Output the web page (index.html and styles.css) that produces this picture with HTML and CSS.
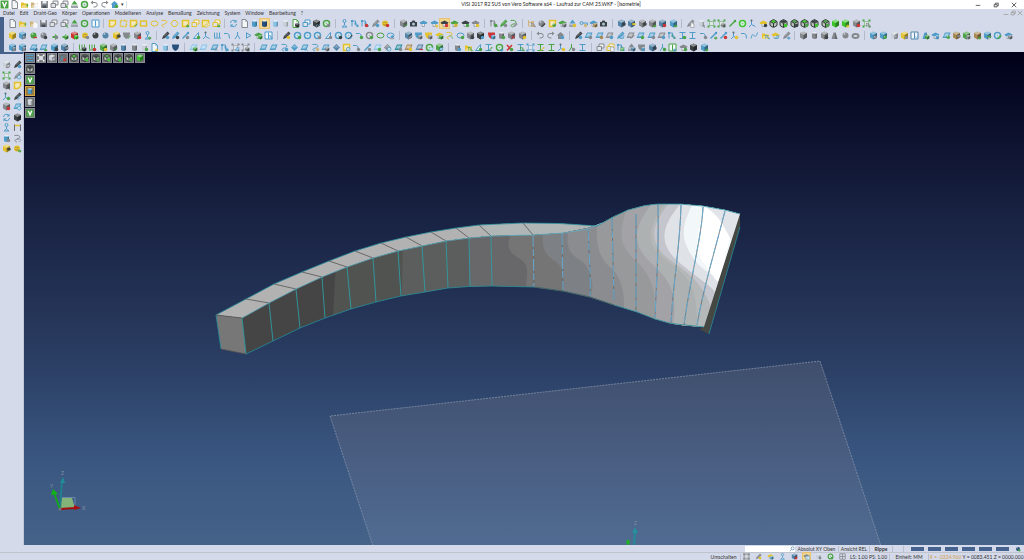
FILE: index.html
```html
<!DOCTYPE html>
<html lang="de">
<head>
    <meta charset="utf-8">
    <title>VISI 2017 R2</title>
    <link rel="stylesheet" href="styles.css">
</head>
<body>
    <header>
        <div class="titlebar">
            <div class="quick" data-icons="v-green doc-grey folder-yellow/up-green folder-tan/doc-white disk-grey copy-grey copy-grey/pointer-green eject-green ring-green undo-grey redo-grey house-blue/dot-green"></div>
            <span class="caret">▾</span>
            <h1>VISI 2017 R2 SU5 von Vero Software x64 - Laufrad zur CAM 25.WKF - [Isometrie]</h1>
            <div class="winctl">
                <button aria-label="Minimieren"><svg viewBox="0 0 8 8"><path d="M1 4.500h6"/></svg></button>
                <button aria-label="Wiederherstellen"><svg viewBox="0 0 8 8"><path d="M1.500 3.500h4v3h-4zM3 3V1.500h4v3.500h-1"/></svg></button>
                <button aria-label="Schließen"><svg viewBox="0 0 8 8"><path d="M1 1l6 6M7 1l-6 6"/></svg></button>
            </div>
        </div>
        <nav class="menu">
            <a href="#">Datei</a><a href="#">Edit</a><a href="#">Draht-Geo</a><a href="#">Körper</a><a href="#">Operationen</a><a href="#">Modellieren</a><a href="#">Analyse</a><a href="#">Bemaßung</a><a href="#">Zeichnung</a><a href="#">System</a><a href="#">Window</a><a href="#">Bearbeitung</a><a href="#">?</a>
            <div class="winctl inner">
                <button aria-label="Fenster minimieren"><svg viewBox="0 0 8 8"><path d="M1 6h6"/></svg></button>
                <button aria-label="Fenster wiederherstellen"><svg viewBox="0 0 8 8"><path d="M1.500 3.500h4v3h-4zM3 3V1.500h4v3.500h-1"/></svg></button>
                <button aria-label="Fenster schließen"><svg viewBox="0 0 8 8"><path d="M1 1l6 6M7 1l-6 6"/></svg></button>
            </div>
        </nav>
        <div class="toolbars">
            <div class="bar bar-1" data-icons="doc-grey folder-yellow/up-green folder-tan/doc-white disk-grey copy-grey copy-grey/pointer-green eject-green ring-green window-blue |
                note-yellow dash-yellow note-yellow/check-green rect-yellow oval-yellow curve-yellow hex-yellow note-yellow/arrow-green copy-yellow note-yellow/copy-yellow copy-yellow/arrow-green |
                refresh-blue doc-grey cyl-blue hi:cyl-navy cyl-sky cyl-light doc-green/cube-dark copy-blue cube-dark/wave-sky ring-green/dot-grey |
                person-blue nodes-blue nodes-blue/dot-red pencil-grey/dot-blue face-yellow/dot-red |
                cube-grey/check-green camera-dark hat-blue hat-blue/arrow-yellow hi:hat-dark/dot-red hat-green/face-yellow hat-dark/dot-green hat-grey/dot-yellow |
                nodes-grey/dot-green pencil-green/dot-grey curve-green/pencil-grey |
                tree-tan/nodes-grey sphere-grey/pencil-dark note-yellow/sphere-green hat-green/cube-grey eject-blue/dot-yellow key-blue/dot-tan hat-blue/cube-brown camera-dark |
                cube-steel/flag-dark cube-steel/flag-yellow cube-grey/flag-dark cube-grey/arrow-green cube-steel/dot-red cube-blue/arrow-green |
                pencil-grey/doc-grey cyl-light/pointer-grey fit-green fit-green/cube-grey line-green ring-lime axis-blue hat-yellow/dot-dark wire-lime wire-dark/dot-lime wire-green/dot-dark wire-lime/dot-green wire-dark/dot-lime wire-green/dot-green cube-lime cube-lime/arrow-yellow cube-grey/dot-red fit-green/nodes-grey"></div>
            <div class="bar bar-2" data-icons="cube-yellow cube-blue/sphere-grey sphere-green/band-red sphere-grey/dot-dark arrow-green/dot-grey arrow-green/cube-green cube-red/cube-lime face-yellow/dot-grey sphere-dark sphere-steel cube-yellow/flag-dark shield-grey/check-green cube-grey/dot-red person-blue/arrow-green |
                pencil-dark/dot-blue pencil-blue/dot-dark line-blue/dot-grey tri-blue/dot-green axis-blue comb-blue corner-blue fork-blue play-blue hat-green/cube-green window-blue/nodes-blue |
                pencil-dark/dot-yellow ring-blue/dot-green ring-blue ring-blue/dot-grey tri-blue/dot-grey ring-blue/dot-dark ring-blue/line-dark corner-blue/dot-green ring-grey/dot-green oval-green oval-blue/eject-blue |
                cube-steel/pencil-grey shield-blue/cube-grey shield-yellow/cube-grey hat-yellow/cube-green curve-yellow/corner-green oval-blue/dot-green cube-grey/dot-dark cube-dark/dot-blue shield-red/cube-blue cyl-grey/dot-green cube-grey/cross-red cube-grey/dot-yellow |
                undo-grey redo-grey house-grey/dot-blue |
                pencil-dark/dot-blue plane-blue/dot-grey plane-blue/dot-brown plane-grey/dot-blue pencil-blue/plane-blue plane-grey/line-grey plane-blue/dot-green plane-blue/dot-grey plane-grey/dot-blue nodes-blue/corner-green beam-blue/dot-green beam-blue corner-blue/dot-grey line-blue/arrow-green line-blue/dot-red axis-blue/dot-yellow corner-blue wave-blue folder-yellow/nodes-blue hat-yellow/plane-blue pencil-grey/arrow-blue |
                cube-grey cyl-grey cube-grey/dot-dark cone-grey sphere-grey torus-grey |
                cube-blue/sphere-grey cube-blue/sphere-green cube-light/sphere-grey cube-yellow/dot-grey window-steel/wave-blue cone-blue/cube-green hat-blue/cyl-blue plane-blue/sphere-green cube-brown/flag-grey cube-green/cube-grey cube-brown/arrow-green cube-blue/hat-green ring-blue/pencil-green hat-blue/cube-grey"></div>
            <div class="bar bar-3" data-icons="cube-blue/cyl-grey cube-blue/cyl-grey plane-blue/cube-blue plane-blue/arrow-green cube-blue/dot-dark cube-steel/flag-grey |
                comb-green/cube-dark comb-green/dot-red cube-green/dot-yellow cube-grey/check-green cyl-steel cyl-grey cyl-light/dot-green doc-blue/arrow-yellow cyl-sky shield-navy |
                plane-sky/cube-green plane-sky plane-blue/fork-grey nodes-blue/arrow-blue fit-grey/plane-blue fit-grey/cube-grey |
                plane-blue plane-blue curve-blue/dot-blue diamond-blue plane-blue/fork-blue curve-blue/dot-tan plane-blue/cube-grey diamond-steel note-yellow/ring-blue corner-blue/dot-grey line-blue/dot-grey plane-sky/dot-green diamond-grey/ring-blue plane-teal/dot-grey plane-brown/dot-yellow plane-steel/band-red ring-green/plane-sky cube-green/plane-blue |
                cyl-grey/dot-blue folder-yellow/nodes-green tri-blue/dot-green beam-blue/line-green ring-green/arrow-blue cross-red/dot-green beam-blue/nodes-green fit-blue beam-green/line-yellow beam-green axis-blue/dot-yellow fork-green/dot-grey beam-blue |
                copy-grey copy-yellow/doc-grey nodes-blue/plane-green eject-grey/cube-steel shield-grey/cyl-blue cube-steel/flag-dark fork-blue/dot-green window-green/arrow-blue hat-grey/dot-green cube-dark cube-blue/arrow-green"></div>
        </div>
    </header>

    <main>
        <aside class="side">
            <div class="palette" data-icons="cube-light/plane-grey pencil-dark/dot-blue fit-green pencil-grey/ring-blue cube-grey/pointer-dark note-yellow axis-blue/dot-green pencil-dark/curve-blue cube-grey/dot-red plane-blue/ring-blue refresh-blue cube-dark person-blue bridge-yellow cyl-blue/dot-grey curve-grey/undo-grey cube-yellow/flag-dark face-yellow/arrow-green"></div>
        </aside>
        <section class="view">
            <svg class="scene" viewBox="24 52 1000 493" preserveAspectRatio="xMidYMid slice">
                <defs>
                    <linearGradient id="plane" x1="0" y1="0" x2="0" y2="1">
                        <stop offset="0" stop-color="#3f4e6c"/>
                        <stop offset=".5" stop-color="#495d81"/>
                        <stop offset="1" stop-color="#506b92"/>
                    </linearGradient>
                    <clipPath id="body">
                        <path d="M242 318 269 303 296 289 322 277 347 267 373 258 398 251 422 246 446 241 469 238 491 236 533 235 563 233 588 228 602 223 613 217 628 210 645 205.500 658 204 680 204 703 206 725 210 740 214 704 327 684 325.500 671 323.500 655 319 637 312 614 305 590 297 563 291 534 287 492 286 469 286.500 448 288 425 292 401 296 376 302 351 309 325 318 300 328 273 341 246 354z"/>
                    </clipPath>
                </defs>

                <!-- work plane -->
                <path d="M330 416 820 361 881 546H373z" fill="url(#plane)"/>
                <path d="M373 546 330 416 820 361 881 546" class="plane-edge"/>

                <!-- rib, top face -->
                <path d="M216 315 246 299 274 284 302 272 329 261 355 251 381 243 406 237 431 232 456 228 479 225 523 223 560 223.500 597 226 588 229 563 233 533 235 491 236 469 238 446 241 422 246 398 251 373 258 347 267 322 277 296 289 269 303 242 318z" fill="#b2b2b2"/>
                <path d="M479 225 523 223 560 223.500 597 226 588 229 563 233 533 235 491 236z" fill="#b0b5b5"/>
                <path d="M246 299 269 303M274 284 296 289M302 272 322 277M329 261 347 267M355 251 373 258M381 243 398 251M406 237 422 246M431 232 446 241M456 228 469 238M479 225 491 236M523 223 533 235" class="seam"/>
                <path d="M216 315 242 318 246 354 221 349z" fill="#777"/>

                <!-- shading bands on the long side -->
                <g clip-path="url(#body)">
                    <path d="M240 190h520v170H240z" fill="#454545"/>
                    <path d="M336 260 332 335H770V190H336z" fill="#505350"/>
                    <path d="M403 240 401 335H770V190H403z" fill="#5b5e5c"/>
                    <path d="M469 230 470 335H770V190H469z" fill="#68686a"/>
                    <path d="M512 230C505 248 509 252 520 259S526 275 526 290V335H770V190H512z" fill="#757575"/>
                    <path d="M543 228C541 248 545 255 555 261S563 280 563 295V335H770V190H543z" fill="#7d8185"/>
                    <path d="M570 225C564 247 570 254 580 260S596 285 590 300V335H770V190H570z" fill="#8b8c90"/>
                    <path d="M598 215C594 245 600 259 610 267S625 290 624 310V335H770V190H598z" fill="#98999b"/>
                    <path d="M630 200C617 235 619 245 636 261S658 295 653 322V335H770V190H630z" fill="#a2a2a7"/>
                    <path d="M655 200C634 225 630 243 650 262S678 290 673 328V335H770V190H655z" fill="#adb1b1"/>
                    <path d="M668 200C644 230 645 246 670 263S697 295 697 330V335H770V190H668z" fill="#b5b8b9"/>
                    <path d="M672 200C648 227 648 245 673 262S706 292 712 310V335H770V190H672z" fill="#c5c6cd"/>
                    <path d="M684 200C659 227 658 245 681 264S710 284 718 296H770V190H684z" fill="#dfe3e7"/>
                    <path d="M695 200C679 228 682 240 692 256S712 272 722 284H770V190H695z" fill="#f2f8fa"/>
                    <path d="M705 207C698 230 692 250 705 265S717 290 722 270L730 238 717 215z" fill="#fff"/>
                    <path d="M700 204 742 213 732 242C724 225 718 213 700 204z" fill="#e1e4e8"/>
                </g>
                <path d="M740 214V227L709 334 699 329 704 327z" fill="#454743"/>

                <path d="M242 318 246 354M269 303 273 341M296 289 300 328M322 277 325 318M347 267 351 309M373 258 376 302M398 251 401 296M422 246 425 292M446 241 448 288M469 238 470 286M491 236 492 286" class="rib"/>
                <path d="M533 235 534 287M562 233 563 290M588 229C589 255 591 275 590 297M612 217 614 300M636 214 636 312M658 204C659 250 656 290 655 318M681 205C680 245 673 285 671 323M703 207C702 235 690 280 684 325M725 211C715 250 703 290 697 325" class="rib-dark"/>
                <path d="M533 235 534 287M562 233 563 290M588 229C589 255 591 275 590 297M612 217 614 300M636 214 636 312M658 204C659 250 656 290 655 318M681 205C680 245 673 285 671 323M703 207C702 235 690 280 684 325M725 211C715 250 703 290 697 325" class="rib-blue"/>
                <path d="M221 349 216 315 246 299 274 284 302 272 329 261 355 251 381 243 406 237 431 232 456 228 479 225 523 223 560 223.500 597 226 613 217 628 210 645 205.500 658 204 680 204 703 206 725 210 740 214M246 354 273 341 300 328 325 318 351 309 376 302 401 296 425 292 448 288 469 286.500 492 286 534 287 563 291 590 297 614 305 637 312 655 319 671 323.500 704 327M740 227 709 334" class="outline"/>
                <path d="M242 318 269 303 296 289 322 277 347 267 373 258 398 251 422 246 446 241 469 238 491 236 533 235 563 233 588 229 602 223" class="outline-light"/>
                <path d="M216 315 242 318M221 349 246 354M534 287 563 291 590 297 614 305" class="seam"/>

                <!-- axis symbols -->
                <path d="M62 498h10l3 10H60z" fill="#85b478"/>
                <path d="M62 497.500h13v11" fill="none" stroke="#8ba2c2" stroke-width=".6"/>
                <path d="M60 509 62 481" stroke="#20808c" stroke-width="2"/>
                <path d="M60 483 63 477 65 483z" fill="#238c99"/>
                <path d="M60 509 54 493" stroke="#12a81a" stroke-width="2"/>
                <path d="M51 495 53 489 58 494z" fill="#0fb416"/>
                <path d="M60 509 75 508" stroke="#a01010" stroke-width="2"/>
                <path d="M74 505 81 508 74 510z" fill="#a80f0f"/>
                <circle cx="60" cy="509" r="1.500" fill="#777"/>
                <text x="61" y="475">Z</text><text x="50" y="488">Y</text><text x="82" y="510">X</text>
                <path d="M634 546 635 531" stroke="#238c99" stroke-width="2"/>
                <path d="M632 533 635 527 638 533z" fill="#27909c"/>
                <path d="M626 541 629 539 630 544 627 545z" fill="#1fae26"/>
                <text x="634" y="525">Z</text>
            </svg>
            <div class="view-top" data-icons="lines-blue fit-white cube-light/plane-grey axis-blue/dot-red wire-lime wire-dark/dot-lime wire-dark/dot-green wire-green/dot-lime wire-dark/dot-lime wire-dark/dot-green cube-lime"></div>
            <div class="view-left" data-icons="wire-dark v-green hi:cyl-blue cyl-light v-green"></div>
        </section>
    </main>

    <footer>
        <div class="status">
            <label class="search"><input type="text" aria-label="Suche"><svg viewBox="0 0 8 8"><circle cx="5" cy="3" r="2"/><path d="M3.500 4.500 1 7"/></svg></label>
            <span class="cell c-plane">Absolut XY Oben</span>
            <span class="cell c-view">Ansicht REL</span>
            <span class="cell c-layer">Rippe</span>
            <span class="cell c-gap"></span>
            <div class="swatches"><i></i><i></i><i></i><i></i><i></i><i></i></div>
            <div class="globe" data-icons="sphere-navy/dot-green"></div>
        </div>
        <div class="status">
            <span class="cell c-switch">Umschalten</span>
            <div class="tools" data-icons="on:fit-grey pencil-grey/dot-yellow hat-yellow/cube-blue person-blue cube-steel/dot-red hi:hat-grey/window-blue cyl-light/dot-grey ring-green/dot-green grid-grey"></div>
            <span class="cell c-scale">LS: 1.00 PS: 1.00</span>
            <span class="cell c-unit">Einheit: MM</span>
            <span class="cell c-pos"><b>X = -0324.960</b> Y = 0083.451 Z = 0000.000</span>
        </div>
    </footer>
    <script src="icons.js"></script>
</body>
</html>
```
FILE: styles.css
```css
* {
  box-sizing: border-box;
}

body {
  display: flex;
  flex-direction: column;
  height: 100vh;
  margin: 0;
  overflow: hidden;
  background: #d5daea;
  color: #333;
  font: 5px/7px Lato, "Open Sans", sans-serif;
}

button {
  display: block;
  padding: 0;
  border: 0;
  background: none;
}

svg {
  display: block;
}

/* title and menu */
.titlebar {
  display: flex;
  align-items: center;
  height: 9px;
  background: #fff;
}

.quick {
  display: flex;
  gap: 1px;
}

.caret {
  width: 8px;
  text-align: center;
  border-right: 1px solid #ddd;
}

h1 {
  flex: 1;
  margin: 0;
  color: #222;
  font-size: 5px;
  font-weight: normal;
  text-align: center;
}

.winctl {
  display: flex;
  gap: 12px;
  margin-right: 7px;
}

.winctl svg {
  width: 6px;
  height: 6px;
  fill: none;
  stroke: #333;
}

.winctl.inner {
  gap: 1px;
  margin: 0 1px 0 auto;
}

.winctl.inner svg {
  stroke: #999;
}

.menu {
  display: flex;
  align-items: center;
  gap: 5px;
  height: 8px;
  padding-left: 3px;
}

.menu a {
  color: #333;
  text-decoration: none;
}

.toolbars {
  height: 35px;
  padding-left: 4px;
  border-left: 4px solid #46618c;
}

.bar {
  display: flex;
  justify-content: space-between;
  align-items: center;
  height: 12px;
}

.bar-1 {
  width: 85%;
}

.bar-2 {
  width: 99%;
}

.bar-3 {
  width: 69%;
}

.ico,
.ico svg {
  width: 9px;
  height: 9px;
}

.ico.hi {
  background: #f3d68c;
  outline: 1px solid #e6c474;
}

.sep {
  width: 6px;
  height: 9px;
  background: linear-gradient(#b3b9c8, #b3b9c8) center / 1px 9px no-repeat;
}

/* work area */
main {
  display: flex;
  flex: 1;
  min-height: 0;
}

.side {
  width: 24px;
  padding: 6px 2px;
  border-top: 2px solid #46618c;
  border-right: 1px solid #c2c8d8;
}

.palette {
  display: grid;
  grid-template-columns: 9px 9px;
  column-gap: 2px;
  align-content: space-between;
  height: 93px;
}

.view {
  position: relative;
  flex: 1;
  overflow: hidden;
  background: linear-gradient(#000018, #151d3c 28%, #2a3d62 62%, #395680 82%, #456389);
}

.scene {
  position: absolute;
  width: 100%;
  height: 100%;
}

.scene text {
  fill: #8290a6;
  font-size: 5px;
}

.plane-edge {
  fill: none;
  stroke: #8d9bb0;
  stroke-dasharray: 2 1;
  stroke-width: .7;
}

.seam {
  fill: none;
  stroke: #555;
  stroke-width: .8;
}

.rib {
  fill: none;
  stroke: #2e9ca3;
  stroke-width: .9;
}

.rib-dark {
  fill: none;
  stroke: #666;
  stroke-width: .8;
}

.rib-blue {
  fill: none;
  stroke: #65afd8;
  stroke-dasharray: 12 2 7 3;
  stroke-width: .9;
}

.outline {
  fill: none;
  stroke: #258b9b;
  stroke-width: .8;
}

.outline-light {
  fill: none;
  stroke: #5fb0c4;
  stroke-width: .8;
}

.view-top,
.view-left {
  position: absolute;
  top: 1px;
  left: 1px;
  display: flex;
  gap: 1px;
}

.view-left {
  top: 12px;
  flex-direction: column;
}

.view .ico {
  width: 10px;
  height: 10px;
  border: 1px solid #8b8e91;
  background: #6f7275;
}

.view .ico svg {
  width: 8px;
  height: 8px;
}

.view .ico.hi {
  border-color: #d5a844;
  background: #9b7d3f;
  outline: 0;
}

/* status */
.status {
  display: flex;
  justify-content: flex-end;
  align-items: center;
  height: 8px;
  border-bottom: 1px solid #c0c4cd;
}

.status + .status {
  height: 7px;
  border: 0;
}

.search {
  display: flex;
  align-items: center;
  width: 50px;
  height: 6px;
  background: #fff;
}

.search input {
  flex: 1;
  min-width: 0;
  height: 5px;
  padding: 0;
  border: 0;
  font: inherit;
}

.search svg {
  width: 6px;
  height: 6px;
  fill: none;
  stroke: #6f92b8;
}

.cell {
  height: 6px;
  border-right: 1px solid #b9bfce;
  line-height: 6px;
  text-align: center;
  white-space: nowrap;
}

.c-plane {
  width: 44px;
}

.c-view {
  width: 31px;
}

.c-layer {
  width: 23px;
  font-weight: bold;
}

.c-gap {
  width: 11px;
}

.swatches {
  display: flex;
  gap: 4px;
  padding: 0 4px 0 7px;
}

.swatches i {
  width: 13px;
  height: 4px;
  background: #46638f;
}

.globe {
  padding: 0 3px 0 2px;
}

.globe .ico,
.globe .ico svg {
  width: 6px;
  height: 6px;
}

.c-switch {
  width: 34px;
}

.tools {
  display: flex;
  gap: 5px;
  padding: 0 2px;
}

.tools .ico,
.tools .ico svg {
  width: 7px;
  height: 7px;
}

.tools .ico.on {
  background: #b5b8c0;
}

.c-scale {
  width: 42px;
}

.c-unit {
  width: 39px;
}

.c-pos {
  width: 95px;
  border: 0;
}

.c-pos b {
  color: #cf9f4e;
  font-weight: normal;
}

/* icon tints */
.grey { color: #85898e; }
.dark { color: #3c4144; }
.light { color: #c9d0d8; }
.white { color: #fff; }
.green { color: #4aa344; }
.lime { color: #3bc52b; }
.yellow { color: #e3c22e; }
.tan { color: #cfb57c; }
.brown { color: #a98a55; }
.red { color: #cc3535; }
.blue { color: #4f9cc8; }
.sky { color: #8cc4e8; }
.steel { color: #5484a8; }
.navy { color: #28507c; }
.teal { color: #2c8ea0; }
```
FILE: icons.js
```js
// base shapes on an 18 x 18 grid, tinted through currentColor
var F = ' fill="currentColor"';
var S = ' fill="none" stroke="currentColor" stroke-width="2"';
var shapes = {
  doc: '<path d="M4 1h7l4 4v12H4z" fill="#f4f6f8" stroke="currentColor" stroke-width="2"/><path d="M11 1v4h4" fill="none" stroke="currentColor"/>',
  folder: '<path d="M2 16V5h5l2 2h7v9z"' + F + '/><path d="M2 16l3-6h12l-3 6z" fill="#fff" opacity=".4"/>',
  up: '<path d="M8 7l5-6 4 6h-3v4h-3V7z"' + F + '/>',
  disk: '<path d="M2 2h14v14H2z"' + F + '/><path d="M5 2h8v5H5z" fill="#e8edf2"/><path d="M5 11h8v5H5z" fill="#4b5158"/>',
  copy: '<path d="M6 2h10v8H6z" fill="#eef0f3" stroke="currentColor" stroke-width="2"/><path d="M2 7h9v8H2z" fill="#dfe3e8" stroke="currentColor" stroke-width="2"/>',
  pointer: '<path d="M8 7l8 4-3 1 3 5-2 1-3-5-3 2z"' + F + '/>',
  eject: '<path d="M9 1l6 8H3z"' + F + '/><path d="M2 11h14v5H2z" fill="#9da4ab"/>',
  ring: '<circle cx="9" cy="9" r="6" fill="#e6eef4" stroke="currentColor" stroke-width="3"/><circle cx="9" cy="9" r="2"' + F + ' opacity=".6"/>',
  undo: '<path d="M5 5h5a4 4 0 010 9H7"' + S + '/><path d="M6 1v8L1 5z"' + F + '/>',
  redo: '<path d="M13 5H8a4 4 0 000 9h3"' + S + '/><path d="M12 1v8l5-4z"' + F + '/>',
  house: '<path d="M1 9l8-7 8 7h-3v7H4V9z"' + F + '/>',
  window: '<path d="M2 2h14v14H2z" fill="#f2f7fb" stroke="currentColor" stroke-width="2"/><path d="M9 3v12"' + S + '/>',
  note: '<path d="M3 3h12v7l-5 5H3z" fill="#f2eabf" stroke="currentColor" stroke-width="3"/>',
  dash: '<path d="M3 3h12v12H3z" fill="none" stroke="currentColor" stroke-width="3" stroke-dasharray="4 2"/>',
  rect: '<path d="M3 4h12v10H3z" fill="none" stroke="currentColor" stroke-width="3"/>',
  oval: '<ellipse cx="9" cy="9" rx="7" ry="5"' + S + '/>',
  hex: '<path d="M6 3h6l4 6-4 6H6L2 9z"' + S + '/>',
  curve: '<path d="M3 3c12-2 14 5 6 7s-5 5-1 6"' + S + '/>',
  check: '<path d="M7 9l3 4 6-9" fill="none" stroke="currentColor" stroke-width="3"/>',
  arrow: '<path d="M5 10h5V6l7 6-7 6v-4H5z"' + F + '/>',
  refresh: '<path d="M3 8a6 6 0 0110-4M15 10a6 6 0 01-10 4"' + S + '/><path d="M15 1v6H9zM3 17v-6h6z"' + F + '/>',
  cyl: '<path d="M4 4v10q5 4 10 0V4z"' + F + '/><ellipse cx="9" cy="4" rx="5" ry="2" fill="#fff" opacity=".5"/><path d="M11 6h3v8l-3 2z" opacity=".25"/>',
  cube: '<path d="M9 1l7 3v9l-7 4-7-4V4z"' + F + '/><path d="M9 1l7 3-7 4-7-4z" fill="#fff" opacity=".4"/><path d="M9 8l7-4v9l-7 4z" opacity=".35"/>',
  wire: '<path d="M9 1l7 4v8l-7 4-7-4V5z" fill="#b9c2bd" stroke="#303532" stroke-width="2"/><path d="M3 5l6-3 6 3-6 3z"' + F + '/><path d="M3 5l6 4 6-4M9 9v7" fill="none" stroke="#303532" stroke-width="2"/>',
  sphere: '<circle cx="9" cy="9" r="6"' + F + '/><circle cx="7" cy="6" r="2" fill="#fff" opacity=".5"/>',
  torus: '<ellipse cx="9" cy="10" rx="6" ry="4" fill="none" stroke="currentColor" stroke-width="4"/>',
  cone: '<path d="M7 3h4l4 13H3z"' + F + '/><path d="M10 3h1l4 13h-5z" opacity=".25"/>',
  band: '<path d="M3 8h12v4H3z"' + F + '/>',
  dot: '<circle cx="13" cy="13" r="3.500"' + F + '/>',
  person: '<circle cx="9" cy="4" r="3"' + S + '/><path d="M9 7v5M4 16l5-4 5 4z"' + S + '/>',
  nodes: '<path d="M4 15V4h7v8h5"' + S + '/><path d="M2 2h4v4H2zM9 7h4v4H9zM13 12h4v4h-4z"' + F + '/>',
  pencil: '<path d="M2 16l2-6 9-9 4 4-9 9z"' + F + '/><path d="M6 11l7-7" stroke="#fff" opacity=".6"/>',
  face: '<circle cx="8" cy="9" r="6"' + F + '/><path d="M6 6v2M10 6v2M5 11q3 3 6 0" fill="none" stroke="#544"/>',
  camera: '<path d="M2 6h3l2-3h4l2 3h3v9H2z"' + F + '/><circle cx="9" cy="10" r="3" fill="#a9c4d8"/>',
  hat: '<path d="M1 7l8-4 8 4-2 3H3z"' + F + '/><path d="M6 10v5h5v-5" fill="#e7ebef" stroke="#6b7076"/>',
  tree: '<path d="M3 2v12h6M3 7h5"' + S + '/><path d="M8 4h6v5H8zM9 11h6v5H9z"' + F + '/>',
  key: '<circle cx="5" cy="8" r="3"' + S + '/><path d="M8 8h9v4"' + S + '/>',
  flag: '<path d="M6 2h11v7H6z"' + F + '/>',
  fit: '<path d="M5 5h8v8H5z" fill="#dfe5e8" stroke="currentColor"/><path d="M1 1h4v4H1zM13 1h4v4h-4zM1 13h4v4H1zM13 13h4v4h-4z"' + F + '/>',
  line: '<path d="M3 15L14 4" stroke="currentColor" stroke-width="3"/><circle cx="14" cy="4" r="2.500"' + F + '/>',
  axis: '<path d="M7 2v9l8 4M7 11l-5 5"' + S + '/><circle cx="7" cy="3" r="2" fill="#5a6872"/>',
  tri: '<path d="M3 15L13 3v12z" fill="#dcebf4" stroke="currentColor" stroke-width="2"/>',
  comb: '<path d="M3 3v10M8 3v10M13 3v10M2 14h14"' + S + '/>',
  corner: '<path d="M2 5h7q4 0 4 10"' + S + '/>',
  fork: '<path d="M4 16l5-8 5 8M9 8V2"' + S + '/>',
  play: '<path d="M5 3v12M5 4l9 5-9 5"' + S + '/>',
  shield: '<path d="M2 3h14c0 8-3 11-7 13C5 14 2 11 2 3z"' + F + '/>',
  cross: '<path d="M4 4l10 11M14 4L4 15" fill="none" stroke="currentColor" stroke-width="3"/>',
  plane: '<path d="M6 3h11l-4 11H1z"' + F + '/><path d="M7 5h7l-2 6H4z" fill="#fff" opacity=".5"/>',
  diamond: '<path d="M9 2l7 7-7 7-7-7z"' + F + '/><path d="M9 4l5 5H4z" fill="#fff" opacity=".3"/>',
  beam: '<path d="M3 3h12M3 15h12M9 3v12"' + S + '/>',
  wave: '<path d="M2 15C6-5 9 23 15 3"' + S + '/>',
  bridge: '<path d="M2 5h14" stroke="currentColor" stroke-width="3"/><path d="M3 3v13M15 3v13" stroke="#6b7076" stroke-width="2"/>',
  lines: '<path d="M1 3h16M1 9h16M1 15h16" stroke="currentColor" stroke-width="3"/>',
  grid: '<path d="M2 2h14v14H2zM9 2v14M2 9h14"' + S + '/>',
  v: '<path d="M1 1h16v16H1z"' + F + '/><path d="M5 4l4 9 4-9" fill="none" stroke="#fff" stroke-width="3"/>'
};

// "shape-tint/shape-tint", the second one is drawn smaller, bottom right
function draw(token) {
  var state = '';
  if (token.indexOf(':') > 0) {
    state = ' ' + token.split(':')[0];
    token = token.split(':')[1];
  }
  var out = token.split('/').map(function (part, i) {
    var p = part.split('-');
    var move = i && p[0] != 'dot' ? ' transform="translate(7 7) scale(.6)"' : '';
    return '<g class="' + p[1] + '"' + move + '>' + shapes[p[0]] + '</g>';
  });
  return '<button class="ico' + state + '" aria-label="' + token + '"><svg viewBox="0 0 18 18">' + out.join('') + '</svg></button>';
}

document.querySelectorAll('[data-icons]').forEach(function (box) {
  box.innerHTML = box.dataset.icons.trim().split(/\s+/).map(function (t) {
    return t == '|' ? '<span class="sep"></span>' : draw(t);
  }).join('');
});
```
